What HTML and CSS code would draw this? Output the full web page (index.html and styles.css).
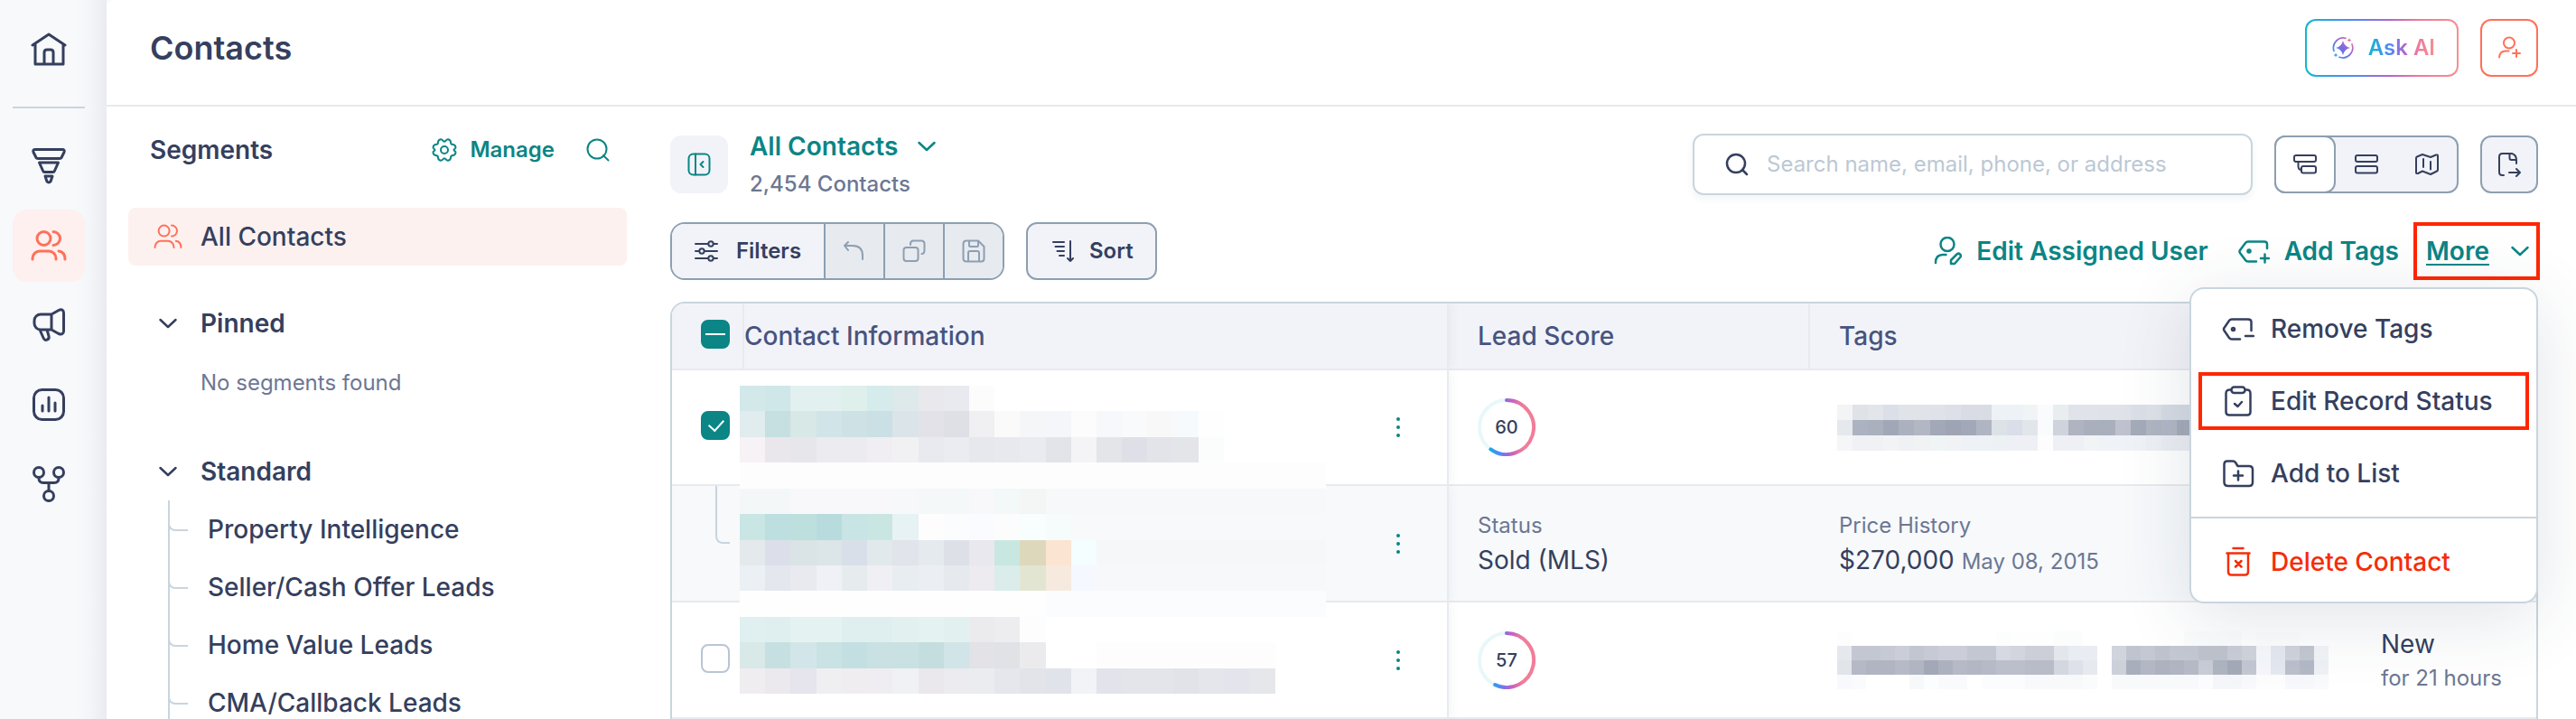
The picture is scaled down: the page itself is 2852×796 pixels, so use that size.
FILE: index.html
```html
<!DOCTYPE html>
<html lang="en">
<head>
    <meta charset="UTF-8">
    <meta name="viewport" content="width=device-width, initial-scale=1.0">
    <title>Contacts</title>
    <link rel="stylesheet" href="styles.css">
</head>
<body>
    <div class="app">
        <nav class="rail">
            <a href="#" class="rail-link" aria-label="Home">
                <svg class="icon" width="40" height="40" viewBox="0 0 40 40"><path d="M2 16 20 4l18 12M5 14.500V37H36V14.500M15 37V24q0-3 3-3h4q3 0 3 3v13"/></svg>
            </a>
            <hr>
            <a href="#" class="rail-link" aria-label="Pipeline">
                <svg class="icon" width="40" height="40" viewBox="0 0 40 40"><path d="M5 1.500h30q3 0 2 3l-3 6q-.5 1-2 1H8q-1.500 0-2-1l-3-6q-1-3 2-3zM9.500 16h21l-4 9q-.5 1.500-2 1.500h-9q-1.500 0-2-1.500zM16 31h8l-2 6q-2 2-4 0z"/></svg>
            </a>
            <a href="#" class="rail-link active" aria-label="Contacts">
                <svg class="icon" width="40" height="40" viewBox="0 0 40 40"><circle cx="14.500" cy="12" r="7.500"/><path d="M25 4.500a7.500 7.500 0 0 1 0 15M2 35v-1a8 8 0 0 1 8-8h10a8 8 0 0 1 8 8v1M31 26q7 1 7 9"/></svg>
            </a>
            <a href="#" class="rail-link" aria-label="Marketing">
                <svg class="icon" width="40" height="40" viewBox="0 0 40 40"><path d="M23 8H11a7 7 0 0 0-7 7v3a7 7 0 0 0 7 7h12zM23 8l8-4.500c3-1.500 5.500-.5 5.500 3v20c0 3.500-2.500 4-5.500 3L23 25M10 25l4 9c2 4.500 7 2 6-2l-2-7"/></svg>
            </a>
            <a href="#" class="rail-link" aria-label="Reports">
                <svg class="icon" width="40" height="40" viewBox="0 0 40 40"><rect x="3.500" y="3.500" width="33" height="33" rx="9"/><path d="M13 21v6M20 12v15M27 18v9"/></svg>
            </a>
            <a href="#" class="rail-link" aria-label="Workflows">
                <svg class="icon" width="40" height="40" viewBox="0 0 40 40"><circle cx="9" cy="7" r="5.500"/><circle cx="31" cy="7" r="5.500"/><circle cx="20" cy="33" r="5.500"/><path d="M9 12.500v1q0 5 5 5h12q5 0 5-5v-1M20 18.500v9"/></svg>
            </a>
        </nav>

        <div class="page">
            <header class="topbar">
                <h1>Contacts</h1>
                <button type="button" class="ask-ai">
                    <svg width="24" height="24" viewBox="0 0 24 24">
                        <defs>
                            <linearGradient id="ai" x1="0" y1="24" x2="24" y2="0" gradientUnits="userSpaceOnUse">
                                <stop offset=".1" stop-color="#2f9bf0"/><stop offset=".5" stop-color="#7d6ae6"/><stop offset=".9" stop-color="#f0709a"/>
                            </linearGradient>
                        </defs>
                        <path d="M12 4q1.500 6.500 8 8-6.500 1.500-8 8-1.500-6.500-8-8 6.500-1.500 8-8zM19 1l.7 1.800 1.800.7-1.800.7L19 6l-.7-1.800-1.800-.7 1.800-.7zM4 17.500l.7 1.800 1.800.7-1.800.7L4 22.500l-.7-1.800-1.800-.7 1.800-.7z" fill="url(#ai)"/>
                        <path d="M15 1.300A11 11 0 0 0 2 15.500M8 22.300A11 11 0 0 0 22 8" fill="none" stroke="url(#ai)" stroke-width="1.700" stroke-linecap="round"/>
                    </svg>
                    <span>Ask AI</span>
                </button>
                <button type="button" class="square coral" aria-label="Add contact">
                    <svg class="icon thin" width="28" height="28" viewBox="0 0 28 28"><circle cx="14" cy="8.500" r="6"/><path d="M3 24.500q.5-7 7-7h3.500M18 20h8M22 16v8"/></svg>
                </button>
            </header>

            <div class="content">
                <aside class="segments">
                    <div class="segments-head">
                        <h2>Segments</h2>
                        <a href="#" class="manage">
                            <svg class="icon thin" width="28" height="28" viewBox="0 0 28 28"><circle cx="14" cy="14" r="4"/><path d="M14 4.800C15.500 4.800 16 2 18 2.300c2.500.5 3 1.500 3 3.200s.8 2.500 2.500 2.500 2.500 1 3 3c.3 1.800-2 1.800-2 3s2.300 1.200 2 3c-.5 2-1.300 3-3 3s-2.500.8-2.500 2.500-.5 2.700-3 3.200c-2 .3-2.500-2.500-4-2.500s-2 2.800-4 2.500c-2.500-.5-3-1.500-3-3.200S6.200 20 4.500 20s-2.500-1-3-3c-.3-1.800 2-1.800 2-3s-2.300-1.200-2-3c.5-2 1.300-3 3-3S7 7.200 7 5.500s.5-2.700 3-3.200c2-.3 2.500 2.500 4 2.500z"/></svg>
                            Manage
                        </a>
                        <a href="#" aria-label="Search segments" class="find">
                            <svg class="icon thin" width="28" height="28" viewBox="0 0 28 28"><circle cx="13" cy="13" r="10.500"/><path d="m20 20 5.500 5.500"/></svg>
                        </a>
                    </div>
                    <a href="#" class="segment selected">
                        <span class="lead"><svg class="icon" width="32" height="32" viewBox="0 0 40 40"><circle cx="14.500" cy="12" r="7.500"/><path d="M25 4.500a7.500 7.500 0 0 1 0 15M2 35v-1a8 8 0 0 1 8-8h10a8 8 0 0 1 8 8v1M31 26q7 1 7 9"/></svg></span>
                        All Contacts
                    </a>
                    <h3 class="group">
                        <span class="lead"><svg class="icon" width="20" height="12" viewBox="0 0 20 12"><path d="m1.500 2 8.500 8 8.500-8"/></svg></span>
                        Pinned
                    </h3>
                    <p class="none">No segments found</p>
                    <h3 class="group">
                        <span class="lead"><svg class="icon" width="20" height="12" viewBox="0 0 20 12"><path d="m1.500 2 8.500 8 8.500-8"/></svg></span>
                        Standard
                    </h3>
                    <ul class="tree">
                        <li><a href="#">Property Intelligence</a></li>
                        <li><a href="#">Seller/Cash Offer Leads</a></li>
                        <li><a href="#">Home Value Leads</a></li>
                        <li><a href="#">CMA/Callback Leads</a></li>
                    </ul>
                </aside>

                <main>
                    <div class="bar">
                        <button type="button" class="collapse" aria-label="Collapse segments">
                            <svg class="icon thin" width="28" height="28" viewBox="0 0 28 28"><rect x="2.500" y="2.500" width="23" height="23" rx="5"/><path d="M10 2.500v23M18.500 11l-3 3 3 3"/></svg>
                        </button>
                        <div class="heading">
                            <a href="#" class="current">All Contacts
                                <svg class="icon" width="20" height="12" viewBox="0 0 20 12"><path d="m1.500 2 8.500 8 8.500-8"/></svg>
                            </a>
                            <p>2,454 Contacts</p>
                        </div>
                        <label class="search">
                            <svg class="icon" width="26" height="26" viewBox="0 0 26 26"><circle cx="12" cy="12" r="10"/><path d="m19 19 5 5"/></svg>
                            <input type="text" placeholder="Search name, email, phone, or address" aria-label="Search contacts">
                        </label>
                        <div class="views">
                            <button type="button" class="on" aria-label="Nested view">
                                <svg class="icon thin" width="28" height="28" viewBox="0 0 28 28"><rect x="2" y="4" width="24" height="7" rx="2"/><rect x="10" y="16" width="16" height="7.500" rx="2"/><path d="M6.500 11v5q0 4 3.500 4"/></svg>
                            </button>
                            <button type="button" aria-label="List view">
                                <svg class="icon thin" width="28" height="28" viewBox="0 0 28 28"><rect x="2" y="4" width="24" height="7" rx="2"/><rect x="2" y="16" width="24" height="7.500" rx="2"/></svg>
                            </button>
                            <button type="button" aria-label="Map view">
                                <svg class="icon thin" width="28" height="28" viewBox="0 0 28 28"><path d="M2 7q0-1 1-1.500l6-2.500 9 3 6-2.500q2-.5 2 1V20q0 1-1 1.500L18 25l-9-3.500L4 24q-2 .5-2-1zM10 8v9M18 11v8.500"/></svg>
                            </button>
                        </div>
                        <button type="button" class="square" aria-label="Export">
                            <svg class="icon thin" width="28" height="28" viewBox="0 0 28 28"><path d="M8 26H6.500Q3 26 3 22.500v-17Q3 2 6.500 2H17q5 1.500 5 7v4M14.500 2v5q0 2 2 2h5M14 23h12M22 19l4 4-4 4"/></svg>
                        </button>
                    </div>

                    <div class="bar tools">
                        <div class="filters">
                            <button type="button" class="filter">
                                <svg class="icon thin" width="26" height="26" viewBox="0 0 26 26"><path d="M1 5h14M21 5h4M1 13h4M11 13h14M1 21h14M21 21h4"/><circle cx="18" cy="5" r="2.700"/><circle cx="8" cy="13" r="2.700"/><circle cx="18" cy="21" r="2.700"/></svg>
                                Filters
                            </button>
                            <button type="button" disabled aria-label="Undo">
                                <svg class="icon thin" width="28" height="28" viewBox="0 0 28 28"><path d="M7 4 3 8l4 5M3 8h9q11 0 11 11v4"/></svg>
                            </button>
                            <button type="button" disabled aria-label="Duplicate">
                                <svg class="icon thin" width="28" height="28" viewBox="0 0 28 28"><rect x="2.500" y="10" width="16" height="15" rx="3"/><path d="M10 7V6q0-3.500 3.500-3.500H22q3.500 0 3.500 3.500v7q0 4-3 4"/></svg>
                            </button>
                            <button type="button" disabled aria-label="Save">
                                <svg class="icon thin" width="28" height="28" viewBox="0 0 28 28"><path d="M6 2.500h13l6.500 6.500v13q0 3.500-3 3.500H6Q2.500 25.500 2.500 22V6q0-3.500 3.500-3.500zM9 2.500v5q0 1.500 1.500 1.500h7q1.500 0 1.500-1.500v-5M8 25.500V16q0-2 2-2h8q2 0 2 2v9.500"/></svg>
                            </button>
                        </div>
                        <button type="button" class="sort">
                            <svg class="icon thin" width="26" height="26" viewBox="0 0 26 26"><path d="M2 3h12M4.500 8H14M6.500 13H14M9 18h5M21 2v22M18 21l3 3 3-3"/></svg>
                            Sort
                        </button>
                        <div class="actions">
                            <a href="#">
                                <svg class="icon" width="32" height="32" viewBox="0 0 32 32"><circle cx="16" cy="8.500" r="7.500"/><path d="M3 29q0-9 8-9h3.500M20 30v-4l7-7q1.500-1 3 .5t.5 3L24 30z"/></svg>
                                Edit Assigned User
                            </a>
                            <a href="#">
                                <svg class="icon" width="36" height="32" viewBox="0 0 36 32"><path d="M21 27.500H12q-2 0-3-1.500L3 18q-1-1.500 0-3l6-8q1-1.500 3-1.500h18q3 0 3 3V13M26 24h9M30.500 19.500v9"/><circle cx="13" cy="16" r="1.500"/></svg>
                                Add Tags
                            </a>
                        </div>
                        <div class="more">
                            <button type="button" class="more-btn" aria-expanded="true">
                                <span>More</span>
                                <svg class="icon" width="20" height="12" viewBox="0 0 20 12"><path d="m1.500 2 8.500 8 8.500-8"/></svg>
                            </button>
                            <ul class="menu">
                                <li><button type="button">
                                    <svg class="icon" width="36" height="36" viewBox="0 0 36 36"><path d="M20 29.500H11q-2 0-3-1.500L2.500 20q-1-1.500 0-3L8 9q1-1.500 3-1.500h18q3.500 0 3.500 3V20M26 26h9"/><circle cx="12.500" cy="18.500" r="1.500"/></svg>
                                    Remove Tags
                                </button></li>
                                <li><button type="button" class="marked">
                                    <svg class="icon" width="36" height="36" viewBox="0 0 36 36"><path d="M10 5.500q-5.500-.5-5.500 4V30q0 3.500 3.500 3.500h20q3.500 0 3.500-3.500V9.500q0-4.500-5-4M14 21l3.500 3 4.500-5"/><rect x="10.500" y="2.500" width="15" height="6.500" rx="3"/></svg>
                                    Edit Record Status
                                </button></li>
                                <li><button type="button">
                                    <svg class="icon" width="36" height="36" viewBox="0 0 36 36"><path d="M6 4.500h6q2 0 3 1.500l2.500 4H30q4 0 4 4v14q0 4-4 4H7q-4.500 0-4.500-4V8q0-3.500 3.500-3.500zM13 20.500h10M18 15.500v10"/></svg>
                                    Add to List
                                </button></li>
                                <li class="last"><button type="button" class="danger">
                                    <svg class="icon" width="36" height="36" viewBox="0 0 36 36"><path d="M12.500 3h11M5.500 8.500h25M7 8.500V29q0 3.500 3.500 3.500h15q3.500 0 3.500-3.500V8.500M15 17l6.500 6.500M21.500 17 15 23.500"/></svg>
                                    Delete Contact
                                </button></li>
                            </ul>
                        </div>
                    </div>

                    <div class="table-wrap">
                        <table>
                            <colgroup>
                                <col class="c-check"><col class="c-name"><col class="c-score"><col><col class="c-stage">
                            </colgroup>
                            <thead>
                                <tr>
                                    <th><input type="checkbox" class="some" aria-label="Select all"></th>
                                    <th class="name">Contact Information</th>
                                    <th>Lead Score</th>
                                    <th class="rule">Tags</th>
                                    <th></th>
                                </tr>
                            </thead>
                            <tbody>
                                <tr class="first">
                                    <td><input type="checkbox" checked aria-label="Select contact"></td>
                                    <td class="name"><button type="button" class="dots" aria-label="Contact options"><i></i><i></i><i></i></button></td>
                                    <td>
                                        <div class="score">
                                            <svg width="64" height="64" viewBox="0 0 64 64">
                                                <defs>
                                                    <linearGradient id="ring" x1="12" y1="0" x2="50" y2="0" gradientUnits="userSpaceOnUse">
                                                        <stop offset="0" stop-color="#16ace0"/><stop offset=".3" stop-color="#4b8df5"/><stop offset=".5" stop-color="#8d6ae6"/><stop offset=".7" stop-color="#cc62b8"/><stop offset="1" stop-color="#f27d98"/>
                                                    </linearGradient>
                                                </defs>
                                                <circle cx="32" cy="32" r="30"/>
                                                <path d="M32 2A30 30 0 1 1 14.400 56.300"/>
                                            </svg>
                                            <span>60</span>
                                        </div>
                                    </td>
                                    <td><svg class="mosaic tags-a" data-mosaic="tagsA"></svg></td>
                                    <td></td>
                                </tr>
                                <tr class="property">
                                    <td><span class="elbow"></span></td>
                                    <td class="name"><button type="button" class="dots" aria-label="Property options"><i></i><i></i><i></i></button></td>
                                    <td><small>Status</small><p>Sold (MLS)</p></td>
                                    <td class="history"><small>Price History</small><p>$270,000 <small>May 08, 2015</small></p></td>
                                    <td></td>
                                </tr>
                                <tr>
                                    <td><input type="checkbox" aria-label="Select contact"></td>
                                    <td class="name"><button type="button" class="dots" aria-label="Contact options"><i></i><i></i><i></i></button></td>
                                    <td>
                                        <div class="score">
                                            <svg width="64" height="64" viewBox="0 0 64 64">
                                                <circle cx="32" cy="32" r="30"/>
                                                <path d="M32 2A30 30 0 1 1 19.200 59.100"/>
                                            </svg>
                                            <span>57</span>
                                        </div>
                                    </td>
                                    <td><svg class="mosaic tags-b" data-mosaic="tagsB"></svg></td>
                                    <td><p>New</p><small>for 21 hours</small></td>
                                </tr>
                            </tbody>
                        </table>
                        <svg class="mosaic names" data-mosaic="names"></svg>
                    </div>
                </main>
            </div>
        </div>
    </div>

    <script src="mosaic.js"></script>
</body>
</html>
```
FILE: styles.css
```css
* {
    box-sizing: border-box;
}
body {
    font-family: Inter, 'Liberation Sans', sans-serif;
    font-size: 28px;
    line-height: 40px;
    color: #353f5e;
    background: #f7f9fb;
    margin: 0;
}
h1, h2, h3, p, ul {
    margin: 0;
    padding: 0;
}
ul {
    list-style: none;
}
a {
    color: inherit;
    text-decoration: none;
}
button, input {
    font: inherit;
    color: inherit;
    margin: 0;
    padding: 0;
    border: none;
    background: none;
}
button {
    display: flex;
    align-items: center;
    justify-content: center;
    cursor: pointer;
}
small {
    font-size: 24px;
    color: #6c7793;
}
.icon {
    flex: none;
    fill: none;
    stroke: currentColor;
    stroke-width: 2.5;
    stroke-linecap: round;
    stroke-linejoin: round;
}
.icon.thin {
    stroke-width: 2;
}
.app {
    display: flex;
    height: 100vh;
    overflow: hidden;
}

/* left rail */
.rail {
    flex: none;
    width: 118px;
    padding: 14px 24px 0 14px;
    background: linear-gradient(90deg, #f7f9fb 84px, #f3f5f8 100px, #e9ebf0 118px);
}
.rail hr {
    height: 2px;
    margin: 24px 0;
    border: none;
    background: #c9d5de;
}
.rail-link {
    display: flex;
    align-items: center;
    justify-content: center;
    height: 80px;
    margin-bottom: 8px;
    border-radius: 16px;
}
.rail-link .icon {
    stroke-width: 3;
}
.rail-link.active {
    background: #fdf0ee;
    color: #ff7059;
}
.rail-link:first-child {
    margin-bottom: 0;
}

/* header */
.page {
    flex: 1;
    min-width: 0;
    background: #fff;
    border-top-left-radius: 8px;
}
.topbar {
    display: flex;
    align-items: center;
    gap: 24px;
    height: 118px;
    padding: 0 42px 10px 48px;
    border-bottom: 2px solid #e7eaef;
}
.topbar h1 {
    flex: 1;
    font-size: 36px;
    font-weight: 600;
}
.ask-ai {
    height: 64px;
    padding: 0 24px 0 28px;
    gap: 16px;
    font-size: 24px;
    font-weight: 600;
    border: 2px solid transparent;
    border-radius: 12px;
    background: linear-gradient(#fff, #fff) padding-box, linear-gradient(90deg, #12b8cc, #4a8df5 30%, #b065d0 55%, #f07a9a 75%, #f59090) border-box;
}
.ask-ai span {
    color: transparent;
    background: linear-gradient(90deg, #12b8cc, #4a8df5 30%, #b065d0 55%, #f07a9a 75%, #f59090) text;
}
.square {
    flex: none;
    width: 64px;
    height: 64px;
    border: 2px solid #8d9fb1;
    border-radius: 12px;
    background: #f2f3f8;
}
.square.coral {
    color: #ff7059;
    border-color: #ff7059;
    background: #fff;
}

/* segments */
.content {
    display: flex;
}
.segments {
    flex: none;
    width: 600px;
    padding: 0 24px;
}
.segments-head {
    display: flex;
    align-items: center;
    height: 96px;
    margin-bottom: 16px;
    padding: 0 18px 0 24px;
}
.segments-head h2 {
    flex: 1;
    font-size: 28px;
    font-weight: 600;
}
.manage {
    display: flex;
    align-items: center;
    gap: 14px;
    margin-right: 34px;
    font-size: 24px;
    font-weight: 600;
    color: #0b8585;
}
.find {
    display: flex;
    color: #0b8585;
}
.segment, .group {
    display: flex;
    align-items: center;
    gap: 20px;
    height: 64px;
    padding: 0 28px;
}
.segment {
    margin-bottom: 32px;
    border-radius: 8px;
    font-weight: 500;
}
.segment.selected {
    background: #fcf1ef;
}
.segment.selected .lead {
    color: #ff7059;
}
.lead {
    display: flex;
    justify-content: center;
    width: 32px;
}
.group {
    font-size: 28px;
    font-weight: 600;
}
.none {
    height: 68px;
    margin-bottom: 32px;
    padding-left: 80px;
    font-size: 24px;
    line-height: 68px;
    color: #6c7793;
}
.tree {
    margin-left: 44px;
    border-left: 2px solid #c9d5de;
}
.tree li {
    position: relative;
    padding-left: 42px;
    line-height: 64px;
    font-weight: 500;
}
.tree li::before {
    content: "";
    position: absolute;
    left: -2px;
    top: 16px;
    width: 20px;
    height: 16px;
    border: solid #c9d5de;
    border-width: 0 0 2px 2px;
    border-bottom-left-radius: 8px;
}

/* list header */
main {
    flex: 1;
    min-width: 0;
    padding: 30px 42px 0 24px;
}
.bar {
    display: flex;
    align-items: center;
    gap: 24px;
    height: 68px;
    margin-bottom: 30px;
}
.bar.tools {
    height: 64px;
    margin-bottom: 24px;
}
.collapse {
    width: 64px;
    height: 64px;
    border-radius: 12px;
    background: #f2f3f8;
    color: #0b8585;
}
.heading {
    flex: 1;
    padding-top: 4px;
}
.heading p {
    font-size: 24px;
    font-weight: 500;
    line-height: 44px;
    color: #6c7793;
}
.current {
    display: flex;
    align-items: center;
    gap: 22px;
    font-weight: 600;
    color: #0b8585;
}
.search {
    display: flex;
    align-items: center;
    gap: 20px;
    width: 620px;
    height: 68px;
    padding: 0 34px;
    border: 2px solid #c9d5de;
    border-radius: 12px;
    box-shadow: 0 4px 8px rgba(53, 63, 94, 0.06);
}
.search input {
    flex: 1;
    min-width: 0;
    font-size: 24px;
    outline: none;
}
.search input::placeholder {
    color: #bcc8d4;
}
.views {
    display: flex;
    height: 64px;
    border: 2px solid #8d9fb1;
    border-radius: 12px;
    background: #f2f3f8;
}
.views button {
    width: 68px;
}
.views .on {
    margin: -2px 0 -2px -2px;
    border: 2px solid #8d9fb1;
    border-radius: 12px;
    background: #fff;
}
.views button:last-child {
    width: 66px;
}
.filters {
    display: flex;
    height: 64px;
    border: 2px solid #8d9fb1;
    border-radius: 16px;
    overflow: hidden;
}
.filters button {
    width: 66px;
    border-left: 2px solid #8d9fb1;
    background: #e7eaef;
    color: #8d9fb1;
}
.filters .filter {
    width: 168px;
    gap: 20px;
    border-left: none;
    background: #f2f3f8;
    color: #353f5e;
    font-size: 24px;
    font-weight: 600;
}
.sort {
    height: 64px;
    padding: 0 24px 0 26px;
    gap: 16px;
    border: 2px solid #8d9fb1;
    border-radius: 12px;
    background: #f2f3f8;
    font-size: 24px;
    font-weight: 600;
}
.actions {
    display: flex;
    flex: 1;
    justify-content: flex-end;
    gap: 32px;
    margin-right: -8px;
    font-weight: 600;
    color: #0b8585;
}
.actions a {
    display: flex;
    align-items: center;
    gap: 16px;
}

/* more menu */
.more {
    position: relative;
    margin-right: -2px;
}
.more-btn {
    justify-content: space-between;
    width: 140px;
    height: 64px;
    padding: 0 8px 0 10px;
    border: 4px solid #ff2600;
    font-weight: 600;
    color: #0b8585;
}
.more-btn span {
    text-decoration: underline;
    text-underline-offset: 4px;
    text-decoration-thickness: 2px;
}
.menu {
    position: absolute;
    z-index: 2;
    top: 72px;
    right: 2px;
    width: 386px;
    padding: 4px 0;
    border: 2px solid #c9d5de;
    border-radius: 16px;
    background: #fff;
    box-shadow: 0 16px 80px rgba(53, 63, 94, 0.14);
}
.menu li {
    padding: 8px;
}
.menu li.last {
    margin-top: 8px;
    padding-top: 16px;
    border-top: 2px solid #c9d5de;
}
.menu button {
    justify-content: flex-start;
    gap: 18px;
    width: 100%;
    height: 64px;
    padding: 0 26px;
    font-weight: 500;
    white-space: nowrap;
}
.menu .marked {
    padding: 0 22px;
    border: 4px solid #ff2600;
}
.menu .danger {
    color: #f52d08;
}

/* table */
.table-wrap {
    position: relative;
    border: 2px solid #c9d5de;
    border-bottom: none;
    border-radius: 16px 16px 0 0;
    overflow: hidden;
}
table {
    width: 100%;
    table-layout: fixed;
    border-collapse: separate;
    border-spacing: 0;
}
.c-check {
    width: 78px;
}
.c-name {
    width: 782px;
}
.c-score {
    width: 398px;
}
.c-stage {
    width: 204px;
}
th, td {
    height: 129px;
    padding: 0 0 0 32px;
    border-bottom: 2px solid #e7eaef;
    text-align: left;
}
.first td {
    height: 128px;
}
th {
    height: 74px;
    background: #f2f3f8;
    color: #475480;
    font-weight: 500;
}
th.name {
    padding-left: 0;
    border-left: 2px solid #e7eaef;
}
th.rule {
    border-left: 2px solid #e7eaef;
}
td.history {
    padding-left: 34px;
}
.name {
    border-right: 2px solid #e7eaef;
    box-shadow: 0 0 12px rgba(53, 63, 94, 0.08);
    clip-path: inset(0 -16px 0 0);
}
.property td {
    background: #f7f9fb;
}
.property .name {
    position: relative;
}
td small {
    line-height: 36px;
}
td > small {
    display: block;
}
input[type="checkbox"] {
    appearance: none;
    position: relative;
    display: block;
    width: 32px;
    height: 32px;
    margin-bottom: 4px;
    border: 2px solid #b9c5d3;
    border-radius: 8px;
    background: #fff;
}
input[type="checkbox"]:checked,
input[type="checkbox"].some {
    border-color: #0b8585;
    background: #0b8585;
}
input[type="checkbox"]:checked::after {
    content: "";
    position: absolute;
    left: 10px;
    top: 4px;
    width: 8px;
    height: 14px;
    border: solid #fff;
    border-width: 0 2px 2px 0;
    transform: rotate(42deg);
}
input[type="checkbox"].some::after {
    content: "";
    position: absolute;
    left: 3px;
    top: 13px;
    width: 22px;
    height: 2px;
    background: #fff;
}
.elbow {
    display: block;
    width: 16px;
    height: 64px;
    margin: -64px 0 0 16px;
    border: solid #c9d5de;
    border-width: 0 0 2px 2px;
    border-bottom-left-radius: 8px;
}
.dots {
    flex-direction: column;
    gap: 5px;
    width: 32px;
    height: 40px;
    margin: 0 38px 0 auto;
}
.dots i {
    width: 4px;
    height: 4px;
    border-radius: 50%;
    background: #0b8585;
}
.score {
    display: grid;
    place-items: center;
    width: 64px;
    height: 64px;
    font-size: 20px;
    font-weight: 500;
}
.score svg, .score span {
    grid-area: 1 / 1;
}
.score svg {
    fill: none;
    stroke-width: 4;
    stroke-linecap: round;
}
.score circle {
    stroke: #e8f8f8;
}
.score path {
    stroke: url(#ring);
}

/* pixelated private data */
.mosaic {
    display: block;
}
.names {
    position: absolute;
    left: 75px;
    top: 91px;
    width: 649px;
    height: 341px;
}
.tags-a {
    width: 393px;
    height: 51px;
}
.tags-b {
    width: 544px;
    height: 64px;
}
```
FILE: mosaic.js
```js
// one string per row, one colour per cell, "-" leaves the cell empty, "x*n" repeats it
var mosaics = {
    names: [
        "d2e8e9 cfe7e8 e2f0f0*2 deefec d5ebec dde9ea e8e8ed e9eaef fcfcfd -*13",
        "e0eced c6dfe1 d8e8e7 d1e4e8 cee2e5 cbe0e4 dbe5e9 e2e2e8 dfe0e6 f0f0f3 fafafa f5f6f8 f5f6f9 fcfcfc f7f8fb f8fafc f8f8f8 f7fafc fefefe -*4",
        "f7f2f6 e9e7ec e6e6eb ecebf0*2 f0eef2 f1f1f4 e9eaef ebecf1 e7e8ed e8e9ee eaebf0 e3e4e9 f4f4f7 e4e5e9 dfe0e7 e3e4e9 e4e5e9 fbfcfc -*4",
        "fdfdfd*23",
        "f3f7f8*2 f8f8fb*4 f7f8fa f4f8f9*2 f8f8fa f3f8f8 f4f6f5 f7f8f9 f7f8fa*10",
        "cae6e4 bddfe0 bddfde b8dcdd c9e4e4 cae6e3 e7f2f4 fdfdfd fafcfe f9fbfe fcfcfd f8fdfe f6fcfc -*10",
        "e4e9ec dcdfea dae3e5 dce5e8 d8dfe8 e1e9ec e1e4ea e5eaee dde0e7 e9e8ee c8e7e1 ddd8bc fce4d2 f4fdff f6f7f9*9",
        "eaf0f4 e4e7ed e9eaef f0f1f6 e6ebee efeff4 e8edf1 ebeff3 e6eaee edeaf0 daedea e3e5d3 f6eadf f5f8ff f7f8fa*9",
        "fefefe*11 fdfefd fbfcfe*11",
        "e0efef dfefef e5f2f2*2 dfefef*2 e2f0f0 e5f2f2 e3f0f0 ebebed ededf0 fdfdfd -*11",
        "d9e9e8 c6e0e1 d2e6e9 c9e2e3 c4dfe1 c9e1e3 c9e1e2 c4dee0 d1e4e8 e2e2e7 e1e2e6 ebebee -*2 fdfdfd*7 -*2",
        "f0edf1 ebe9ed e6e4ec efeff2 efedf0 f0edf2 f0f1f4 eae8ed ecebf0 ebecf0 e6e7ec e3e4ea e1e3ea f2f3f6 e3e4eb e4e5eb*2 e1e3e9 e4e6ec e4e5ec e6e7ea -*2"
    ],
    tagsA: [
        "f2f4f6 dfe2e7 e2e5ea dbdfe7 e0e4e9*2 dfe2e8 dde0e6 d9dce4*2 ecf2f5*2 f1f4f6 fafbfd e8edf0 e0e3e9*2 dfe2e8*2 dbdfe7 dde2e8 d6dbe4*2",
        "e5e8ed adb2c0 abb0be a2a7b8 acb1bf b3b7c4 a3a8b8 9fa4b5 a3a8b8 b0b5c3 dde2e7 d9dee8 e1e6ea fafbfd ced3dc b0b4c0 aaafbd*2 bfc2ce a4abb9 b0b5c2 b2b7c5 a5abb9",
        "f5f6f8 f0f1f5*2 f2f3f5 f0f1f5 f0f2f4 eff4f5 f0f2f5 eef2f6*2 ecf1f4 eef0f5*2 fdfdfd eef0f5*2 f2f3f5 eff2f6*3 edf0f4 ebeef3*2"
    ],
    tagsB: [
        "fdfdfd -*10 fcfdfd fdfefd*3 fbfdfc*2 -*7 fbfcfd*4 - fdfdfd*3 -",
        "e5e8ed c4c7d1 c3c7d1 c7cad4 cbced8 c2c6d0 c7cad4 cbced8 cbced8 c3c7d1*2 d6d9e1 d2d5dd cccfd8*2 e3e6ea e9ecf2*2 - d0d4dc c0c4ce c4c8d2 bfc3cd c4c8d2*2 bfc3cd*2 c9cdd7 d0d4dc f6f8fb e4e8f0 d0d3dc c3c7d1 f2f4f7",
        "e1e4e9 b5b9c5 b1b5c2*2 b6bac6 b1b5c2 a3a8b8 adb1bf b6bac6 b3b7c4 b6bac6 bbbfcb*2 b8bcc8*2 d3d7e0 dee1ea e6e9ee - ccd0d9 a9aebd b3b7c4 acb2be b0b5c1 b6bac6 c8ccd6 afb4c1 a5aab9 c3c7d2 f6f7fb e4e8f0 bcc0cd b4b9c7 eff1f5",
        "f8f9fc fafbfd -*3 f7f8fa fcfdfe f9fafc*2 - fbfcfe*3 f8f9fa*4 fafbfc - f7f9fb*6 fbfcfd f5f6fa*2 f8f9fb fdfdfe*2 f7f8fb*2 f9fafb"
    ]
};

document.querySelectorAll("[data-mosaic]").forEach(function (svg) {
    var rows = mosaics[svg.dataset.mosaic];
    var cols = 0;
    var html = "";
    rows.forEach(function (row, y) {
        var x = 0;
        row.split(" ").forEach(function (part) {
            var p = part.split("*");
            var n = Number(p[1] || 1);
            if (p[0] !== "-") {
                html += '<rect x="' + x + '" y="' + y + '" width="' + n + '" height="1" fill="#' + p[0] + '"/>';
            }
            x += n;
        });
        cols = Math.max(cols, x);
    });
    svg.setAttribute("viewBox", "0 0 " + cols + " " + rows.length);
    svg.setAttribute("preserveAspectRatio", "none");
    svg.setAttribute("shape-rendering", "crispEdges");
    svg.innerHTML = html;
});
```
